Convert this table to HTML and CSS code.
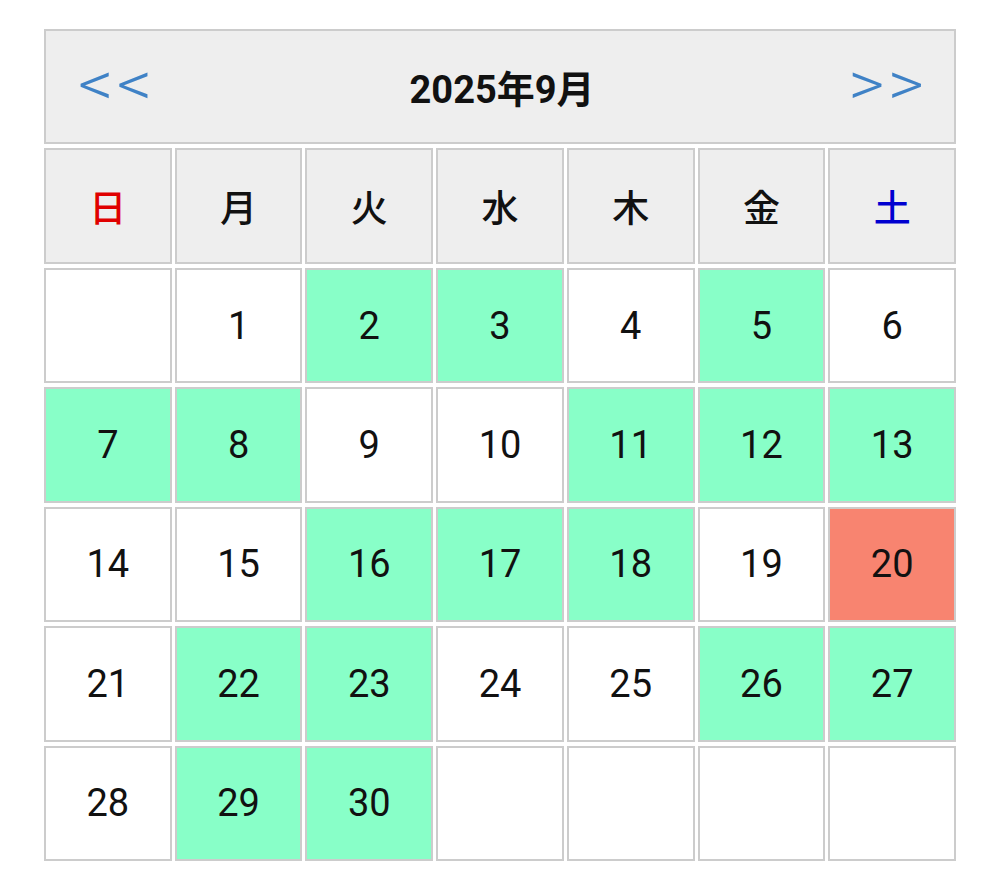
FILE: index.html
```html
<!DOCTYPE html>
<html lang="ja">
<head>
<meta charset="utf-8">
<title>カレンダー</title>
<link rel="stylesheet" href="styles.css">
</head>
<body>
<div class="calendar">
  <div class="cal-header">
    <span class="nav prev">&lt;&lt;</span>
    <span class="title">2025年9月</span>
    <span class="nav next">&gt;&gt;</span>
  </div>
  <div class="cell dow sun">日</div>
  <div class="cell dow">月</div>
  <div class="cell dow">火</div>
  <div class="cell dow">水</div>
  <div class="cell dow">木</div>
  <div class="cell dow">金</div>
  <div class="cell dow sat">土</div>

  <div class="cell"></div>
  <div class="cell">1</div>
  <div class="cell open">2</div>
  <div class="cell open">3</div>
  <div class="cell">4</div>
  <div class="cell open">5</div>
  <div class="cell">6</div>

  <div class="cell open">7</div>
  <div class="cell open">8</div>
  <div class="cell">9</div>
  <div class="cell">10</div>
  <div class="cell open">11</div>
  <div class="cell open">12</div>
  <div class="cell open">13</div>

  <div class="cell">14</div>
  <div class="cell">15</div>
  <div class="cell open">16</div>
  <div class="cell open">17</div>
  <div class="cell open">18</div>
  <div class="cell">19</div>
  <div class="cell today">20</div>

  <div class="cell">21</div>
  <div class="cell open">22</div>
  <div class="cell open">23</div>
  <div class="cell">24</div>
  <div class="cell">25</div>
  <div class="cell open">26</div>
  <div class="cell open">27</div>

  <div class="cell">28</div>
  <div class="cell open">29</div>
  <div class="cell open">30</div>
  <div class="cell"></div>
  <div class="cell"></div>
  <div class="cell"></div>
  <div class="cell"></div>
</div>
</body>
</html>
```

FILE: styles.css
```css
html, body {
  margin: 0;
  padding: 0;
  background: #ffffff;
}

body {
  font-family: Roboto, "Noto Sans CJK JP", sans-serif;
  color: #111111;
}

.calendar {
  margin: 29px 0 0 44px;
  width: 912px;
  height: 832px;
  display: grid;
  grid-template-columns: repeat(7, 1fr);
  grid-template-rows: repeat(7, 1fr);
  column-gap: 3px;
  row-gap: 4px;
}

.cal-header {
  grid-column: 1 / -1;
  box-sizing: border-box;
  border: 2px solid #cccccc;
  background: #eeeeee;
  display: flex;
  align-items: center;
  justify-content: space-between;
  padding: 0 27px 6px 32px;
}

.nav {
  display: inline-block;
  color: #3f82c6;
  font-family: Roboto, sans-serif;
  font-size: 62px;
  font-weight: 300;
  letter-spacing: 3px;
  line-height: 1;
  transform: scaleX(1.12);
}

.prev {
  transform-origin: left center;
}

.next {
  transform-origin: right center;
}

.title {
  font-family: Roboto, "Noto Sans CJK JP", sans-serif;
  font-size: 38px;
  font-weight: 700;
  color: #111111;
  margin-top: 6px;
}

.cell {
  box-sizing: border-box;
  border: 2px solid #cccccc;
  background: #ffffff;
  display: flex;
  align-items: center;
  justify-content: center;
  font-size: 38px;
}

.dow {
  background: #eeeeee;
  font-family: "Noto Sans CJK JP", sans-serif;
  font-size: 37px;
  font-weight: 500;
}

.sun {
  color: #e00000;
}

.sat {
  color: #0000d0;
}

.open {
  background: #88ffc8;
}

.today {
  background: #f88470;
}
```
